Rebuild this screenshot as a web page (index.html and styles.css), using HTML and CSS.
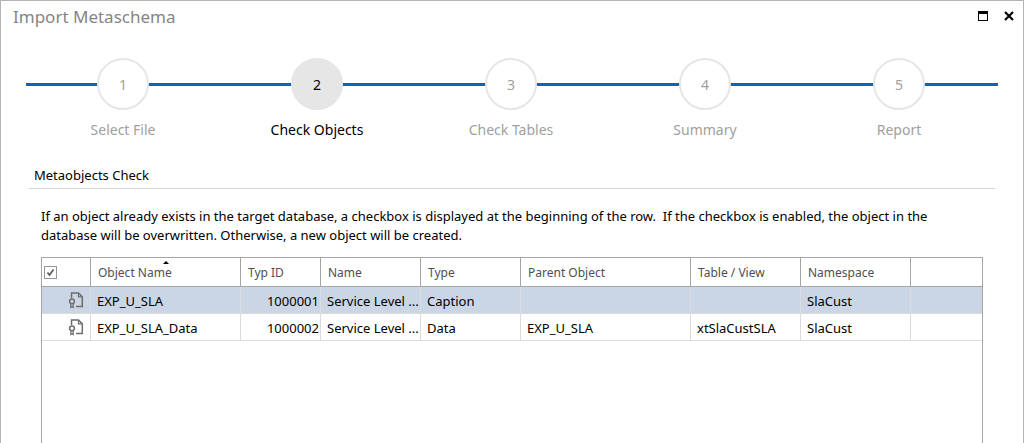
FILE: index.html
```html
<!DOCTYPE html>
<html lang="en">
<head>
<meta charset="utf-8">
<title>Import Metaschema</title>
<link rel="stylesheet" href="styles.css">
</head>
<body>
<svg class="defs" aria-hidden="true">
  <symbol id="doc" viewBox="0 0 16 18">
    <path d="M3.5 7V2H10.5L14.3 5.8V15.5H8" fill="none" stroke="#6e6e6e" stroke-width="1.5"/>
    <path d="M10.5 2V5.8H14.3" fill="none" stroke="#6e6e6e" stroke-width="1.2"/>
    <circle cx="4" cy="10.3" r="2.4" fill="none" stroke="#6e6e6e" stroke-width="1.5"/>
    <path d="M2.8 12.5V16.5L4 15.5L5.2 16.5V12.5" fill="none" stroke="#6e6e6e" stroke-width="1.2"/>
  </symbol>
</svg>
<div class="window">
  <header class="titlebar">
    <h1 class="title">Import Metaschema</h1>
    <div class="controls">
      <button class="control" type="button" aria-label="Maximize">
        <svg width="10" height="10" viewBox="0 0 10 10"><path d="M0 0H10V10H0ZM1 3V9H9V3Z" fill="#000" fill-rule="evenodd"/></svg>
      </button>
      <button class="control" type="button" aria-label="Close">
        <svg width="10" height="10" viewBox="0 0 10 10"><path d="M1 1L9 9M9 1L1 9" stroke="#000" stroke-width="2.2"/></svg>
      </button>
    </div>
  </header>

  <ol class="steps">
    <li class="step"><span class="circle">1</span><span class="label">Select File</span></li>
    <li class="step current" aria-current="step"><span class="circle">2</span><span class="label">Check Objects</span></li>
    <li class="step"><span class="circle">3</span><span class="label">Check Tables</span></li>
    <li class="step"><span class="circle">4</span><span class="label">Summary</span></li>
    <li class="step"><span class="circle">5</span><span class="label">Report</span></li>
  </ol>

  <main class="content">
    <h2 class="section">Metaobjects Check</h2>
    <p class="hint">If an object already exists in the target database, a checkbox is displayed at the beginning of the row.&nbsp; If the checkbox is enabled, the object in the<br>database will be overwritten. Otherwise, a new object will be created.</p>
    <div class="panel">
      <table class="grid">
        <colgroup>
          <col class="c-check"><col class="c-object"><col class="c-id"><col class="c-name"><col class="c-type"><col class="c-parent"><col class="c-table"><col class="c-space"><col>
        </colgroup>
        <thead>
          <tr>
            <th class="check"><input class="tick" type="checkbox" checked aria-label="Select all"></th>
            <th class="sorted" aria-sort="ascending">Object Name</th>
            <th>Typ ID</th><th>Name</th><th>Type</th><th>Parent Object</th><th>Table / View</th><th>Namespace</th><th></th>
          </tr>
        </thead>
        <tbody>
          <tr class="selected">
            <td class="icon"><svg width="16" height="18"><use href="#doc"/></svg></td>
            <td>EXP_U_SLA</td><td class="num">1000001</td><td>Service Level ...</td><td>Caption</td><td></td><td></td><td>SlaCust</td><td></td>
          </tr>
          <tr>
            <td class="icon"><svg width="16" height="18"><use href="#doc"/></svg></td>
            <td>EXP_U_SLA_Data</td><td class="num">1000002</td><td>Service Level ...</td><td>Data</td><td>EXP_U_SLA</td><td>xtSlaCustSLA</td><td>SlaCust</td><td></td>
          </tr>
        </tbody>
      </table>
    </div>
  </main>
</div>
</body>
</html>
```
FILE: styles.css
```css
* { box-sizing: border-box; }

body {
  margin: 0;
  background: #fff;
  color: #000;
  font: 13px/19px "Noto Sans", "Open Sans", sans-serif;
}

.defs { position: absolute; width: 0; height: 0; }

.window {
  display: flex;
  flex-direction: column;
  min-height: 100vh;
  border: 1px solid #b4b4b4;
  border-bottom: 0;
}

.titlebar {
  display: flex;
  align-items: center;
  justify-content: space-between;
  height: 30px;
  padding: 0 9px 0 12px;
}

.title {
  margin: 0;
  color: #858585;
  font-size: 17px;
  font-weight: 400;
}

.controls { display: flex; gap: 16px; }

.control {
  display: flex;
  padding: 0;
  border: 0;
  background: none;
}

.steps {
  display: flex;
  margin: 27px 25px 0 25px;
  padding: 0 2px 0 0;
  list-style: none;
  color: #a0a0a0;
  background: linear-gradient(#0f64b4, #0f64b4) 0 25px / 100% 3px no-repeat;
}

.step {
  display: flex;
  flex: 1;
  flex-direction: column;
  align-items: center;
  gap: 10px;
}

.circle {
  display: flex;
  align-items: center;
  justify-content: center;
  width: 52px;
  height: 52px;
  border: 2px solid #e6e6e6;
  border-radius: 50%;
  background: #fff;
  font-size: 14px;
}

.label { font-size: 14px; }

.current { color: #000; }
.current .circle { background: #e6e6e6; }

.content {
  display: flex;
  flex: 1;
  flex-direction: column;
  margin: 27px 28px 0 28px;
}

.section {
  margin: 0;
  padding: 0 5px 3px;
  border-bottom: 1px solid #d6d6d6;
  font-size: 13px;
  font-weight: 400;
}

.hint {
  margin: 18px 0 12px 12px;
  white-space: nowrap;
}

.panel {
  flex: 1;
  margin: 0 12px;
  border: 1px solid #a5a5a5;
  border-bottom: 0;
}

.grid {
  width: 100%;
  table-layout: fixed;
  border-collapse: separate;
  border-spacing: 0;
}

.c-check { width: 49px; }
.c-object { width: 150px; }
.c-id { width: 80px; }
.c-name, .c-type { width: 100px; }
.c-parent { width: 170px; }
.c-table, .c-space { width: 110px; }

.grid th {
  height: 29px;
  padding: 0 7px;
  border-right: 1px solid #a5a5a5;
  border-bottom: 1px solid #a5a5a5;
  color: #505050;
  font-size: 12px;
  font-weight: 400;
  text-align: left;
}

.grid td {
  height: 27px;
  padding: 2px 1px 0 6px;
  border-right: 1px solid #dcdcdc;
  border-bottom: 1px solid #dcdcdc;
  overflow: hidden;
  white-space: nowrap;
}

.grid th:last-child,
.grid td:last-child { border-right: 0; }

.grid .num { text-align: right; }
.selected { background: #cad5e5; }

.grid .check { padding: 0 2px; }

.tick {
  display: block;
  width: 13px;
  height: 13px;
  margin: 0;
  appearance: none;
  border: 1px solid #969696;
  background: #fff url("data:image/svg+xml,%3Csvg xmlns='http://www.w3.org/2000/svg' viewBox='0 0 11 11'%3E%3Cpath d='M2.5 5.5L4.5 8L8.5 2.5' fill='none' stroke='%23606060' stroke-width='1.8'/%3E%3C/svg%3E");
}

.grid .icon { padding: 0 6px 0 0; }
.icon svg { display: block; margin-left: auto; }

.grid .sorted { position: relative; }

.sorted::after {
  position: absolute;
  top: 3px;
  left: calc(50% - 3px);
  border: 3px solid transparent;
  border-top: 0;
  border-bottom-color: #000;
  content: "";
}
```
